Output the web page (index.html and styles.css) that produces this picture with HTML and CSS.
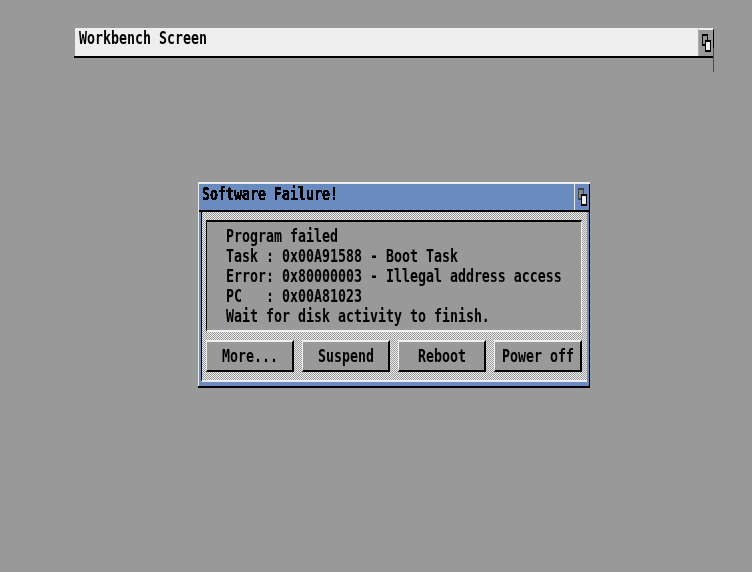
FILE: index.html
```html
<!DOCTYPE html>
<html lang="en">
<head>
<meta charset="utf-8">
<title>Software Failure</title>
<link rel="stylesheet" href="styles.css">
</head>
<body>
<svg class="defs" width="0" height="0" aria-hidden="true">
  <filter id="crisp" x="0" y="0" width="100%" height="100%" color-interpolation-filters="sRGB">
    <feComponentTransfer>
      <feFuncA type="discrete" tableValues="0 1 1 1"/>
    </feComponentTransfer>
  </filter>
</svg>

<header class="screenbar">
  <div class="screenbar-title"><span class="pixel">Workbench Screen</span></div>
  <div class="screenbar-gadget">
    <div class="depth"><i class="depth-back"></i><i class="depth-front"></i></div>
  </div>
  <i class="screen-marker"></i>
</header>

<section class="alert">
  <div class="alert-frame">
    <div class="alert-titlebar">
      <div class="alert-title"><span class="pixel">Software Failure!</span></div>
      <div class="alert-gadget">
        <div class="depth depth-alert"><i class="depth-back"></i><i class="depth-front"></i></div>
      </div>
    </div>
    <div class="alert-body">
      <div class="message">
        <div class="line"><span class="pixel">Program failed</span></div>
        <div class="line"><span class="pixel">Task : 0x00A91588 - Boot Task</span></div>
        <div class="line"><span class="pixel">Error: 0x80000003 - Illegal address access</span></div>
        <div class="line"><span class="pixel">PC   : 0x00A81023</span></div>
        <div class="line"><span class="pixel">Wait for disk activity to finish.</span></div>
      </div>
      <div class="buttons">
        <div class="btn"><span class="pixel">More...</span></div>
        <div class="btn"><span class="pixel">Suspend</span></div>
        <div class="btn"><span class="pixel">Reboot</span></div>
        <div class="btn"><span class="pixel">Power off</span></div>
      </div>
    </div>
  </div>
</section>
</body>
</html>
```
FILE: styles.css
```css
* { box-sizing: border-box; }

html, body { height: 100%; }

body {
  margin: 0;
  padding: 28px 0 0 74px;
  background: #999;
  overflow: hidden;
  color: #000;
  font-family: "DejaVu Sans Mono", monospace;
  font-size: 13.29px;
  font-weight: 700;
}

.defs { position: absolute; }

.pixel {
  display: inline-block;
  white-space: pre;
  line-height: 20px;
  height: 20px;
  transform: scaleY(1.28);
  transform-origin: 0 14px;
}

/* Workbench screen bar */
.screenbar {
  position: relative;
  display: flex;
  width: 640px;
  height: 30px;
  border-bottom: 2px solid #000;
}

.screenbar-title {
  flex: 1;
  margin-left: 1px;
  padding: 2px 0 0 4px;
  background: #eee;
  filter: url(#crisp);
}

.screenbar-gadget {
  width: 16px;
  padding-left: 3px;
  background: #999;
  border-top: 2px solid #eee;
  border-left: 1px solid #aaa;
  border-right: 1px solid #000;
}

.screen-marker {
  position: absolute;
  left: 639px;
  top: 20px;
  width: 1px;
  height: 24px;
  background: #c01818;
}

/* Depth gadget */
.depth {
  position: relative;
  width: 9px;
  height: 18px;
  margin-top: 4px;
}

.depth-back,
.depth-front {
  position: absolute;
  width: 6px;
  height: 12px;
  border-style: solid;
  border-color: #000;
  border-width: 2px 1px;
}

.depth-back {
  left: 0;
  top: 0;
  background: #999;
}

.depth-front {
  left: 3px;
  top: 6px;
  background: #eee;
}

.depth-alert .depth-back {
  background: #888;
  border-color: #444;
}

/* Alert window */
.alert {
  width: 392px;
  height: 206px;
  margin: 124px 0 0 124px;
  padding: 2px 0 0 1px;
  background: #eee;
  border-bottom: 2px solid #000;
}

.alert-frame {
  display: flex;
  flex-direction: column;
  height: 100%;
  background: #6a8bbf;
  border-right: 1px solid #000;
  padding-bottom: 4px;
}

.alert-titlebar {
  display: flex;
  flex: none;
  height: 28px;
  border-bottom: 2px solid #000;
}

.alert-title {
  flex: 1;
  padding: 2px 0 0 3px;
  filter: url(#crisp);
}

.alert-gadget {
  width: 15px;
  padding-left: 3px;
  border-left: 1px solid #eee;
}

.alert-body {
  flex: 1;
  margin: 0 2px;
  padding: 8px 5px 0 4px;
  background: repeating-conic-gradient(#eee 0 25%, #999 0 50%) 0 0 / 2px 2px;
  border-left: 1px solid #000;
  border-bottom: 2px solid #eee;
}

.message {
  height: 112px;
  padding: 6px 0 0 19px;
  background: #999;
  border-top: 2px solid #000;
  border-left: 1px solid #000;
  border-right: 1px solid #eee;
  border-bottom: 2px solid #eee;
  filter: url(#crisp);
}

.line { height: 20px; }

.buttons {
  display: flex;
  gap: 8px;
  margin-top: 8px;
}

.btn {
  width: 88px;
  height: 32px;
  padding: 6px 0 0 1px;
  text-align: center;
  background: #999;
  border-top: 2px solid #eee;
  border-left: 1px solid #eee;
  border-right: 2px solid #000;
  border-bottom: 2px solid #000;
  filter: url(#crisp);
}
```
